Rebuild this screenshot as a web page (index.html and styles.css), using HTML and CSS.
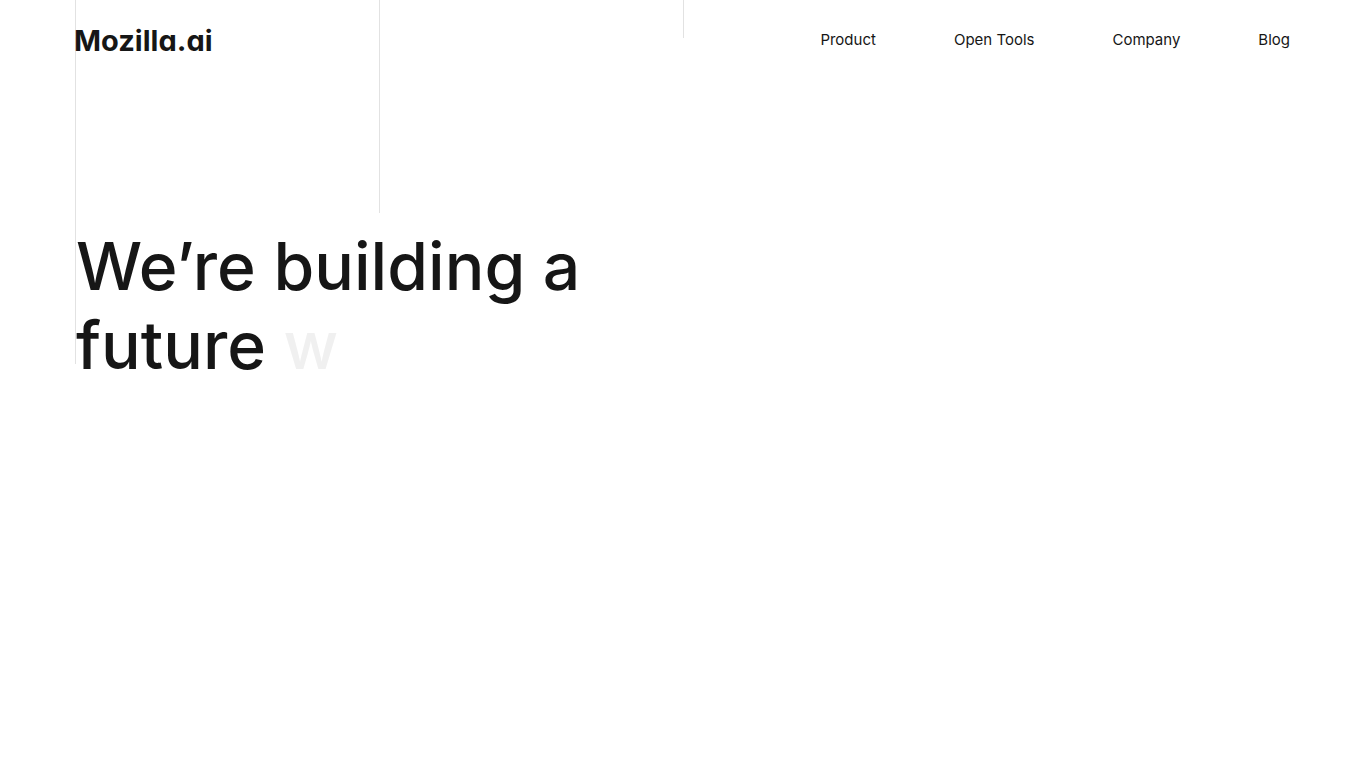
FILE: index.html
```html
<!DOCTYPE html>
<html lang="en">
<head>
  <meta charset="UTF-8">
  <meta name="viewport" content="width=device-width, initial-scale=1.0">
  <title>Mozilla.ai</title>
  <link rel="stylesheet" href="styles.css">
</head>
<body>
  <!-- Vertical guide lines behind the content -->
  <div class="guides" aria-hidden="true">
    <span class="guide guide-long"></span>
    <span class="guide guide-medium"></span>
    <span class="guide guide-short"></span>
  </div>

  <header class="header">
    <a class="logo" href="/">Mozilla.ai</a>
    <nav class="nav" aria-label="Main">
      <a href="/product">Product</a>
      <a href="/open-tools">Open Tools</a>
      <a href="/company">Company</a>
      <a href="/blog">Blog</a>
    </nav>
  </header>

  <main class="hero">
    <h1 class="hero-title">We’re building a<br>future <span class="typing">w</span></h1>
  </main>
</body>
</html>
```
FILE: styles.css
```css
* {
  box-sizing: border-box;
}
body {
  margin: 0;
  background-color: #fff;
  color: #161616;
  font-family: Inter, "Liberation Sans", sans-serif;
}
a {
  color: inherit;
  text-decoration: none;
}
.guides {
  position: absolute;
  inset: 0;
  z-index: -1;
  display: grid;
  grid-template-columns: repeat(4, 1fr);
  align-items: start;
  padding: 0 75px;
}
.guide {
  border-left: 1px solid #e2e2e2;
}
.guide-long {
  height: 364px;
}
.guide-medium {
  height: 213px;
}
.guide-short {
  height: 38px;
}
.header {
  display: flex;
  align-items: center;
  justify-content: space-between;
  height: 80px;
  padding: 0 76px 0 74px;
}
.logo {
  font-size: 29px;
  font-weight: 700;
  /* single-storey a */
  font-feature-settings: "cv11";
}
.nav {
  display: flex;
  gap: 78px;
  padding-bottom: 2px;
  font-size: 15px;
}
.hero {
  padding: 147px 76px 0;
}
.hero-title {
  margin: 0;
  font-size: 66px;
  font-weight: 500;
  line-height: 79px;
}
.typing {
  color: #f0f0f0;
}
```
